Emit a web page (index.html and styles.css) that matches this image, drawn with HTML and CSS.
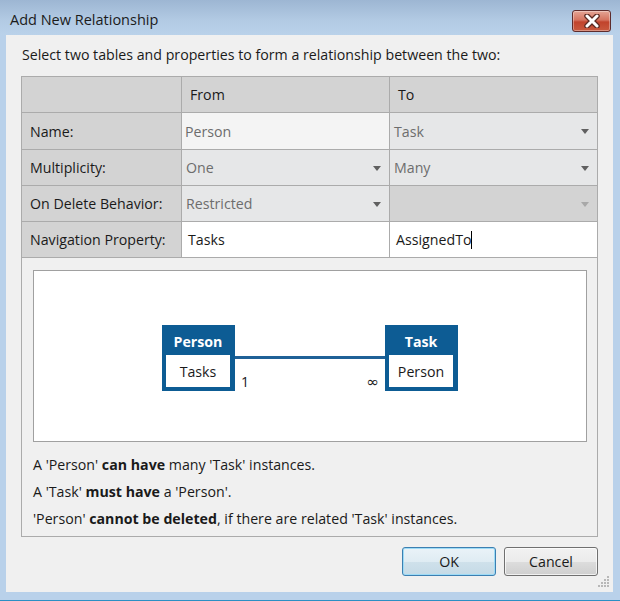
FILE: index.html
```html
<!DOCTYPE html>
<html>
<head>
<meta charset="utf-8">
<link rel="stylesheet" href="styles.css">
</head>
<body>
<div class="window">
  <div class="titlebar">
    <span class="title">Add New Relationship</span>
    <div class="close">
      <svg width="18" height="14" viewBox="0 0 18 14">
        <path d="M4 2 L14 12 M14 2 L4 12" stroke="#5b2a22" stroke-width="5.5" stroke-linecap="round"/>
        <path d="M4 2 L14 12 M14 2 L4 12" stroke="#ffffff" stroke-width="3" stroke-linecap="round"/>
      </svg>
    </div>
  </div>
  <div class="client">
    <p class="intro">Select two tables and properties to form a relationship between the two:</p>
    <div class="group">
      <div class="grid">
        <div class="cell label"></div>
        <div class="cell head">From</div>
        <div class="cell head">To</div>

        <div class="cell label">Name:</div>
        <div class="cell readonly">Person</div>
        <div class="cell combo">Task<span class="arrow"></span></div>

        <div class="cell label">Multiplicity:</div>
        <div class="cell combo">One<span class="arrow"></span></div>
        <div class="cell combo">Many<span class="arrow"></span></div>

        <div class="cell label">On Delete Behavior:</div>
        <div class="cell combo">Restricted<span class="arrow"></span></div>
        <div class="cell combo disabled"><span class="arrow light"></span></div>

        <div class="cell label">Navigation Property:</div>
        <div class="cell edit">Tasks</div>
        <div class="cell edit">AssignedTo<span class="caret"></span></div>
      </div>
      <div class="diagram">
        <div class="entity">
          <div class="entity-head">Person</div>
          <div class="entity-body">Tasks</div>
        </div>
        <div class="connector">
          <div class="line"></div>
          <div class="ends"><span>1</span><span class="inf">∞</span></div>
        </div>
        <div class="entity">
          <div class="entity-head">Task</div>
          <div class="entity-body">Person</div>
        </div>
      </div>
      <div class="summary">
        <p>A 'Person' <b>can have</b> many 'Task' instances.</p>
        <p>A 'Task' <b>must have</b> a 'Person'.</p>
        <p>'Person' <b>cannot be deleted</b>, if there are related 'Task' instances.</p>
      </div>
    </div>
    <div class="buttons">
      <div class="btn default">OK</div>
      <div class="btn">Cancel</div>
    </div>
    <svg class="grip" width="12" height="12" viewBox="0 0 12 12">
      <g fill="#b8b8b8">
        <rect x="9" y="0" width="2" height="2"/>
        <rect x="6" y="3" width="2" height="2"/><rect x="9" y="3" width="2" height="2"/>
        <rect x="3" y="6" width="2" height="2"/><rect x="6" y="6" width="2" height="2"/><rect x="9" y="6" width="2" height="2"/>
        <rect x="0" y="9" width="2" height="2"/><rect x="3" y="9" width="2" height="2"/><rect x="6" y="9" width="2" height="2"/><rect x="9" y="9" width="2" height="2"/>
      </g>
    </svg>
  </div>
  <div class="bottom-edge"></div>
</div>
</body>
</html>
```

FILE: styles.css
```css
html, body {
  margin: 0;
  padding: 0;
}
body {
  width: 620px;
  height: 601px;
  overflow: hidden;
  background: #b9d1ea;
  font-family: "Open Sans", "Noto Sans", "Liberation Sans", sans-serif;
  font-size: 14.2px;
  color: #1a1a1a;
}
.window {
  width: 620px;
  height: 601px;
  display: flex;
  flex-direction: column;
  background: #b9d1ea;
}
.titlebar {
  height: 35px;
  flex: none;
  display: flex;
  align-items: flex-start;
  justify-content: space-between;
  background: linear-gradient(#9db6d3, #b3cbe4 60%, #bad2ea);
}
.title {
  margin: 10px 0 0 10px;
  font-size: 14.5px;
  color: #1b1b1b;
  line-height: 20px;
}
.close {
  margin: 10px 9px 0 0;
  width: 37px;
  height: 20px;
  border: 1px solid #5e2c2c;
  border-radius: 3px;
  background: linear-gradient(#e4a595, #d5735f 45%, #c1432c 55%, #c95a3f);
  display: flex;
  align-items: center;
  justify-content: center;
  box-shadow: inset 0 0 0 1px rgba(255,255,255,0.35);
}
.client {
  position: relative;
  margin-left: 6px;
  width: 607px;
  height: 557px;
  flex: none;
  background: #f0f0f0;
  display: flex;
  flex-direction: column;
}
.intro {
  margin: 0;
  padding: 10px 0 0 16px;
  line-height: 20px;
  height: 20px;
  color: #1a1a1a;
}
.group {
  margin: 11px 0 0 15px;
  width: 575px;
  border: 1px solid #ababab;
  background: #f0f0f0;
  display: flex;
  flex-direction: column;
}
.grid {
  display: grid;
  grid-template-columns: 159px 207px 207px;
  grid-template-rows: 35px 36px 35px 35px 35px;
  gap: 1px;
  background: #ababab;
  border-bottom: 1px solid #ababab;
}
.cell {
  display: flex;
  align-items: center;
  position: relative;
  white-space: nowrap;
}
.label {
  background: #d3d3d3;
  padding-left: 8px;
}
.head {
  background: #d3d3d3;
  padding-left: 8px;
}
.readonly {
  background: #f4f4f4;
  color: #6d6d6d;
  padding-left: 3px;
}
.combo {
  background: #e6e7e8;
  color: #6d6d6d;
  padding-left: 4px;
}
.combo.disabled {
  background: #d3d3d3;
}
.edit {
  background: #ffffff;
  padding-left: 6px;
}
.arrow {
  position: absolute;
  right: 8px;
  top: 16px;
  width: 0;
  height: 0;
  border-left: 4.5px solid transparent;
  border-right: 4.5px solid transparent;
  border-top: 5px solid #606060;
}
.arrow.light {
  border-top-color: #a8a8a8;
}
.caret {
  display: inline-block;
  width: 1px;
  height: 18px;
  background: #000;
  margin-left: 0;
}
.diagram {
  margin: 12px 0 0 11px;
  width: 552px;
  height: 170px;
  border: 1px solid #a0a0a0;
  background: #ffffff;
  display: flex;
  justify-content: center;
  align-items: flex-start;
  padding-top: 0;
  box-sizing: content-box;
}
.entity {
  margin-top: 54px;
  width: 64px;
  background: #0d5c94;
  padding: 0 5px 4px 4px;
  display: flex;
  flex-direction: column;
}
.entity-head {
  height: 30px;
  padding-top: 3px;
  box-sizing: border-box;
  color: #ffffff;
  font-weight: bold;
  display: flex;
  align-items: center;
  justify-content: center;
}
.entity-body {
  height: 32px;
  background: #ffffff;
  display: flex;
  align-items: center;
  justify-content: center;
  color: #1a1a1a;
}
.connector {
  width: 150px;
  margin-top: 85px;
  display: flex;
  flex-direction: column;
}
.line {
  height: 3px;
  background: #1f6197;
}
.ends {
  display: flex;
  justify-content: space-between;
  align-items: baseline;
  padding: 13px 6px 0 6px;
  line-height: 20px;
}
.inf {
  font-family: "DejaVu Sans", sans-serif;
  font-size: 15px;
}
.summary {
  padding: 9px 0 4px 11px;
}
.summary p {
  margin: 0;
  line-height: 27px;
}
.buttons {
  display: flex;
  justify-content: flex-end;
  gap: 8px;
  margin: 10px 15px 0 0;
}
.btn {
  width: 92px;
  height: 27px;
  border: 1px solid #707070;
  border-radius: 3px;
  background: linear-gradient(#f2f2f2, #ebebeb 50%, #dddddd 50%, #cfcfcf);
  display: flex;
  align-items: center;
  justify-content: center;
  box-shadow: inset 0 0 0 1px rgba(255,255,255,0.7);
}
.btn.default {
  border-color: #3c7fb1;
  background: linear-gradient(#eaf3f8, #dfecf3 50%, #cfe1eb 50%, #c5dae6);
  box-shadow: inset 0 0 0 1px #9ddbf6;
}
.grip {
  position: absolute;
  right: 3px;
  bottom: 4px;
}
.bottom-edge {
  margin-top: 8px;
  height: 1px;
  background: #2b8fc4;
}
```
